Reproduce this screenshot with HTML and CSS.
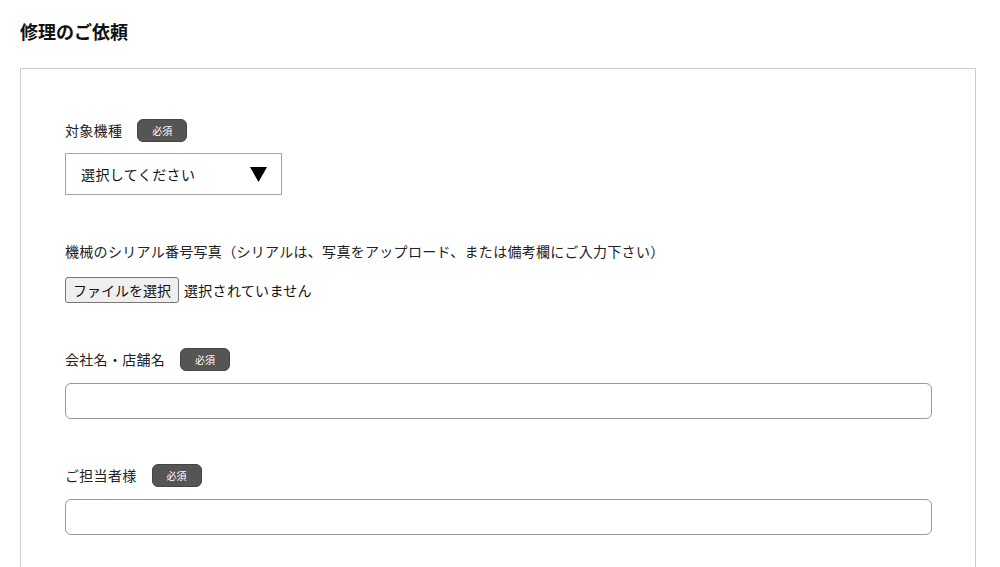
FILE: index.html
```html
<!DOCTYPE html>
<html lang="ja">
<head>
<meta charset="utf-8">
<title>修理のご依頼</title>
<link rel="stylesheet" href="styles.css">
</head>
<body>
<div class="page">
  <h1 class="title">修理のご依頼</h1>
  <form class="box">
    <div class="field">
      <div class="label-row"><span class="label">対象機種</span><span class="badge">必須</span></div>
      <div class="select">
        <span class="select-text">選択してください</span>
        <svg class="arrow" width="17" height="15" viewBox="0 0 17 15"><polygon points="0,0 17,0 8.5,15" fill="#000"/></svg>
      </div>
    </div>
    <div class="field">
      <div class="label-row"><span class="label">機械のシリアル番号写真（シリアルは、写真をアップロード、または備考欄にご入力下さい）</span></div>
      <div class="file-row"><span class="file-btn">ファイルを選択</span><span class="file-name">選択されていません</span></div>
    </div>
    <div class="field">
      <div class="label-row"><span class="label">会社名・店舗名</span><span class="badge">必須</span></div>
      <div class="input"></div>
    </div>
    <div class="field">
      <div class="label-row"><span class="label">ご担当者様</span><span class="badge">必須</span></div>
      <div class="input"></div>
    </div>
  </form>
</div>
</body>
</html>
```
FILE: styles.css
```css
html, body {
  margin: 0;
  padding: 0;
  background: #fff;
}
body {
  font-family: "Noto Sans CJK JP", "Noto Sans", sans-serif;
  color: #222;
}
.page {
  padding: 19px 24px 0 20px;
}
.title {
  margin: 0;
  font-size: 18px;
  line-height: 24px;
  font-weight: 700;
  color: #111;
}
.box {
  margin-top: 25px;
  border: 1px solid #ccc;
  border-bottom: none;
  padding: 50px 43px 60px 44px;
  display: flex;
  flex-direction: column;
  gap: 45px;
}
.field {
  display: flex;
  flex-direction: column;
  align-items: flex-start;
}
.label-row {
  display: flex;
  align-items: center;
  gap: 15px;
  height: 23px;
  margin-bottom: 11px;
}
.label {
  font-size: 14px;
  letter-spacing: 0.3px;
  line-height: 23px;
  color: #222;
}
.badge {
  box-sizing: border-box;
  width: 50px;
  height: 23px;
  border-radius: 6px;
  background: #555;
  border: 1px solid #444;
  color: #fff;
  font-size: 10px;
  display: flex;
  align-items: center;
  justify-content: center;
}
.select {
  box-sizing: border-box;
  width: 217px;
  height: 42px;
  border: 1px solid #a3a3a3;
  display: flex;
  align-items: center;
  justify-content: space-between;
  padding: 0 14px 0 15px;
}
.select-text {
  font-size: 14px;
  letter-spacing: 0.4px;
  color: #111;
}
.arrow {
  display: block;
}
.file-row {
  display: flex;
  align-items: center;
  gap: 5px;
  margin-top: 3px;
}
.file-btn {
  box-sizing: border-box;
  height: 26px;
  width: 114px;
  background: #efefef;
  border: 1px solid #767676;
  border-radius: 3px;
  font-size: 14px;
  color: #111;
  display: flex;
  align-items: center;
  justify-content: center;
}
.file-name {
  font-size: 14px;
  letter-spacing: 0.3px;
  color: #111;
}
.input {
  box-sizing: border-box;
  align-self: stretch;
  height: 36px;
  border: 1px solid #999;
  border-radius: 6px;
  margin-top: 1px;
}
```
